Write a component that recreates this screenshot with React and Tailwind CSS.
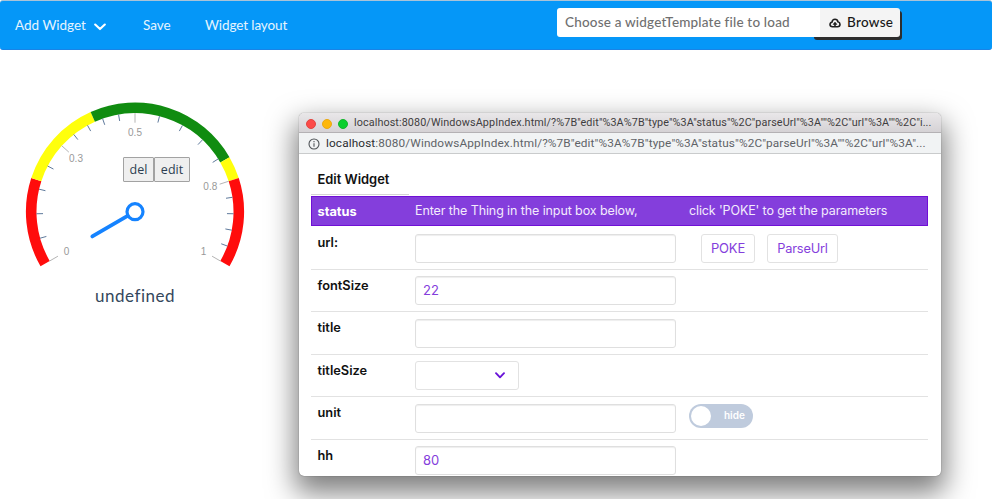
import React from "react";

const CX = 135;
const CY = 211.7;

function point(value, radius) {
  const angle = ((value * 240 - 210) * Math.PI) / 180;
  return [CX + radius * Math.cos(angle), CY + radius * Math.sin(angle)];
}

function arc(from, to) {
  const r = 103.8;
  const [x1, y1] = point(from, r);
  const [x2, y2] = point(to, r);
  return `M${x1} ${y1}A${r} ${r} 0 0 1 ${x2} ${y2}`;
}

const zones = [
  [0, 0.2, "#ff0c0c"],
  [0.2, 0.4, "#ffff0c"],
  [0.4, 0.75, "#108c10"],
  [0.75, 0.8, "#ffff0c"],
  [0.8, 1, "#ff0c0c"],
];

const majorTicks = [0, 0.3, 0.5, 0.8, 1];
const minorTicks = [
  0.06, 0.12, 0.18, 0.24, 0.34, 0.38, 0.42, 0.46, 0.56, 0.62, 0.68, 0.74, 0.84, 0.88, 0.92, 0.96,
];

const gaugeLabels = [
  ["0", 66.5, 254.5],
  ["0.3", 76, 162],
  ["0.5", 135, 135.7],
  ["0.8", 210.3, 190],
  ["1", 203.5, 254.5],
];

function Tick({ value, inner, color }) {
  const [x1, y1] = point(value, 98.6);
  const [x2, y2] = point(value, inner);
  return <line x1={x1} y1={y1} x2={x2} y2={y2} stroke={color} strokeWidth="1" />;
}

function Gauge() {
  return (
    <section className="relative h-[449px] w-[270px]">
      <svg className="block" width="270" height="230" viewBox="0 50 270 230">
        {zones.map(([a, b, color]) => (
          <path key={a} d={arc(a, b)} fill="none" stroke={color} strokeWidth="10.6" />
        ))}
        {minorTicks.map((v) => (
          <Tick key={v} value={v} inner={92} color="#5f7a9c" />
        ))}
        {majorTicks.map((v) => (
          <Tick key={v} value={v} inner={89} color="#b4b4b4" />
        ))}
        <g fill="#999" fontSize="10" textAnchor="middle" className="font-['Liberation_Sans',sans-serif]">
          {gaugeLabels.map(([t, x, y]) => (
            <text key={t} x={x} y={y}>{t}</text>
          ))}
        </g>
        <line x1="128" y1="215.7" x2="92.3" y2="236.4" stroke="#1583ff" strokeWidth="3.8" strokeLinecap="round" />
        <circle cx={CX} cy={CY} r="8" fill="#fff" stroke="#1583ff" strokeWidth="3.2" />
      </svg>
      <p className="pt-[5px] text-center font-['Lato',sans-serif] text-[17px] leading-[22px] tracking-[0.5px] text-[#34475c]">
        undefined
      </p>
      <div className="absolute left-[123px] top-[107px] flex font-['Open_Sans',sans-serif] text-[12.5px] leading-[22px] text-[#2c3e50]">
        <button className="h-[25px] w-[31px] rounded-[1px] border border-[#a2a2a2] bg-[#efefef]">del</button>
        <button className="h-[25px] w-9 rounded-[1px] border border-[#a2a2a2] bg-[#efefef]">edit</button>
      </div>
    </section>
  );
}

function NavBar() {
  return (
    <nav className="flex h-[50px] rounded-[3px] border-y border-b-[#1a83e6] border-t-[#a9c3d8] bg-[#0597f8] font-['Lato',sans-serif] text-[13.5px] text-[#e6f4fe]">
      <div className="flex h-[49px] w-[128px] items-center pl-[15px]">
        <span className="whitespace-nowrap">Add Widget</span>
        <svg className="ml-2 mt-0.5" width="12" height="8" viewBox="0 0 12 8" fill="none" stroke="#fff" strokeWidth="2.1">
          <path d="M1.2 1.5 6 6.1l4.8-4.6" strokeLinecap="round" strokeLinejoin="round" />
        </svg>
      </div>
      <span className="flex h-[49px] w-[77px] items-center pl-[15px]">Save</span>
      <span className="flex h-[49px] w-[352px] items-center whitespace-nowrap tracking-[-0.1px]">Widget layout</span>
      <div className="relative isolate mt-[7px] flex h-[29px] w-[343px] rounded-[3px]">
        <i className="absolute -bottom-[3px] -right-0.5 -z-10 h-[29px] w-[88px] rounded-[3px] bg-[#2d2d2d]" />
        <div className="flex flex-1 items-center rounded-l-[3px] bg-white pl-2 text-[13.5px] font-medium tracking-[0.19px] text-[#707070]">
          <span className="whitespace-nowrap">Choose a widgetTemplate file to load</span>
        </div>
        <div className="flex w-20 items-center rounded-r-[3px] bg-[#f4f4f4] pl-[9px] font-medium text-[#181818]">
          <svg width="12" height="10" viewBox="0 0 24 20" fill="none" stroke="#202020" strokeWidth="3.2" strokeLinejoin="round">
            <path d="M7 17.5C4 17.5 2 15.5 2 13s1.8-4.3 4-4.6C6.5 4.500 9 2.500 12 2.500s5.300 2 5.800 5c2.400.6 4.200 2.300 4.200 5 0 3-2 5-5 5Z" />
            <path d="M12 17V11" />
            <path d="M8 12.800 12 8l4 4.800Z" fill="#202020" strokeWidth="1" />
          </svg>
          <span className="ml-[6px] tracking-[0.3px]">Browse</span>
        </div>
      </div>
    </nav>
  );
}

function TextBox({ value }) {
  return (
    <div className="flex h-[29px] w-[261px] items-center rounded-[3px] border border-[#dfdfdf] px-[7px] pt-px text-[13px] text-[#843edc] shadow-[inset_0_1px_1px_#eee]">
      {value}
    </div>
  );
}

function Row({ label, children, last }) {
  return (
    <div className={`flex h-[42.5px] shrink-0 items-start ${last ? "" : "border-b border-[#e2e2e2]"}`}>
      <div className="w-[104px] pl-[6.5px] pt-[6px] text-[12.8px] font-semibold leading-5 text-[#111]">{label}</div>
      <div className="flex flex-1 pt-[6.5px]">{children}</div>
    </div>
  );
}

function Chevron() {
  return (
    <svg className="ml-auto mr-[13px]" width="10" height="7" viewBox="0 0 10 7" fill="none" stroke="#6914d8" strokeWidth="1.9" strokeLinecap="round" strokeLinejoin="round">
      <path d="M1 1.2 5 5.3l4-4.1" />
    </svg>
  );
}

function EditWindow() {
  return (
    <section className="absolute left-[299px] top-[113px] flex h-[363px] w-[642px] flex-col overflow-hidden rounded-[5px] bg-white font-['Inter',sans-serif] shadow-[0_0_1px_rgba(0,0,0,0.65),0_13px_28px_4px_rgba(0,0,0,0.5)]">
      <header className="flex h-5 shrink-0 items-center border-b border-[#b4b1b4] bg-gradient-to-b from-[#e9e7e9] to-[#d5d2d5] pl-[6.5px] pt-[2px]">
        <i className="size-[10px] shrink-0 rounded-full border border-[#e2453f] bg-[#fc4a48]" />
        <i className="ml-1.5 size-[10px] shrink-0 rounded-full border border-[#e9a914] bg-[#fdb70b]" />
        <i className="ml-1.5 size-[10px] shrink-0 rounded-full border border-[#15b52c] bg-[#0bcf2e]" />
        <span className="ml-[6.5px] whitespace-nowrap font-['Roboto',sans-serif] text-[10.8px] tracking-[0.095px] text-[#3f3d40]">
          localhost:8080/WindowsAppIndex.html/?%7B"edit"%3A%7B"type"%3A"status"%2C"parseUrl"%3A""%2C"url"%3A""%2C"i...
        </span>
      </header>
      <div className="flex h-[21px] shrink-0 items-center border-b border-[#c9cbcc] bg-[#f1f3f4] pl-[9px] pt-px text-[#5f6368]">
        <svg className="shrink-0" width="12" height="12" viewBox="0 0 12 12" fill="none" stroke="#4f5357" strokeWidth="1.1">
          <circle cx="6" cy="6" r="5" />
          <path d="M6 5.3v3.4M6 3v1.2" />
        </svg>
        <span className="ml-1.5 whitespace-nowrap font-['Roboto',sans-serif] text-[11.8px] tracking-[0.125px]">
          <span className="text-[#2b2d30]">localhost</span>
          :8080/WindowsAppIndex.html/?%7B"edit"%3A%7B"type"%3A"status"%2C"parseUrl"%3A""%2C"url"%3A"...
        </span>
      </div>
      <main className="flex min-h-0 flex-1 flex-col pl-3 pr-[13px]">
        <h1 className="h-[41px] w-[98px] shrink-0 whitespace-nowrap border-b border-[#d4d4d4] pl-[6.5px] pt-[16px] text-[12.9px] font-semibold leading-5 text-[#111]">
          Edit Widget
        </h1>
        <div className="mt-px flex h-[30px] shrink-0 items-center border border-[#7010d5] bg-[#843edc] pt-px text-[12.5px] text-[#f3ebfc]">
          <span className="w-[103px] pl-[5.5px] text-[12.8px] font-bold text-white">status</span>
          <span className="w-[274px] whitespace-nowrap tracking-[-0.1px]">Enter the Thing in the input box below,</span>
          <span className="whitespace-nowrap tracking-[-0.12px]">click 'POKE' to get the parameters</span>
        </div>
        <div className="mt-px flex flex-col">
          <Row label="url:">
            <TextBox />
            <button className="ml-[25px] h-[29px] w-[54px] rounded-[3px] border border-[#e2e2e2] pt-px text-[13px] tracking-[-0.2px] text-[#843edc]">POKE</button>
            <button className="ml-3 h-[29px] w-[71px] rounded-[3px] border border-[#e2e2e2] pt-px text-[12.8px] tracking-[-0.2px] text-[#843edc]">ParseUrl</button>
          </Row>
          <Row label="fontSize"><TextBox value="22" /></Row>
          <Row label="title"><TextBox /></Row>
          <Row label="titleSize">
            <div className="flex h-[29px] w-[104px] items-center rounded-[3px] border border-[#e2e2e2]">
              <Chevron />
            </div>
          </Row>
          <Row label="unit">
            <TextBox />
            <div className="ml-[13px] flex h-[24px] w-[64px] items-center rounded-full bg-[#bfcbdd] pl-[2px] text-[10px] font-semibold text-white">
              <i className="size-5 rounded-full bg-white" />
              <span className="ml-[13px]">hide</span>
            </div>
          </Row>
          <Row label="hh" last><TextBox value="80" /></Row>
        </div>
      </main>
    </section>
  );
}

export default function App() {
  return (
    <div className="relative h-[499px] w-[992px] overflow-hidden bg-white">
      <NavBar />
      <Gauge />
      <EditWindow />
    </div>
  );
}
